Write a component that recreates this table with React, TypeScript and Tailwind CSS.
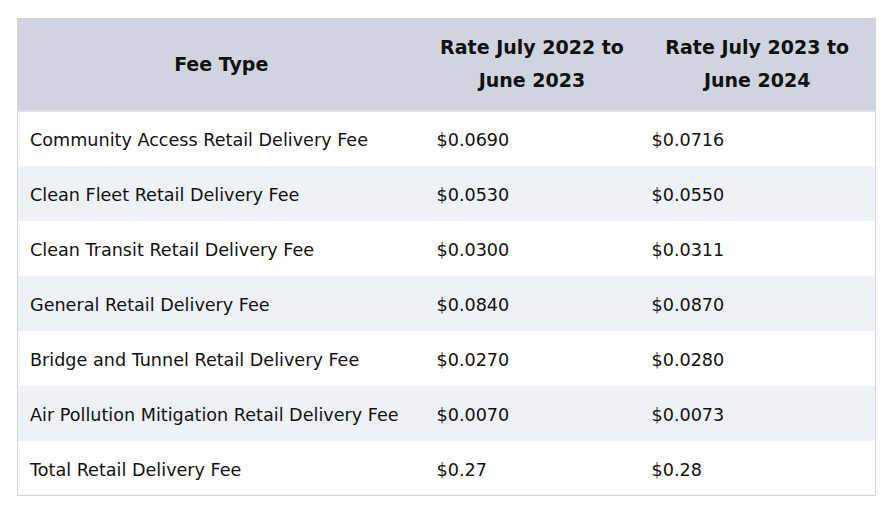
import React from 'react';

const rows = [
    ['Community Access Retail Delivery Fee', '$0.0690', '$0.0716'],
    ['Clean Fleet Retail Delivery Fee', '$0.0530', '$0.0550'],
    ['Clean Transit Retail Delivery Fee', '$0.0300', '$0.0311'],
    ['General Retail Delivery Fee', '$0.0840', '$0.0870'],
    ['Bridge and Tunnel Retail Delivery Fee', '$0.0270', '$0.0280'],
    ['Air Pollution Mitigation Retail Delivery Fee', '$0.0070', '$0.0073'],
    ['Total Retail Delivery Fee', '$0.27', '$0.28'],
];

const App: React.FC = () => {
    return (
        <div className="w-[889px] h-[508px] bg-white pt-[18px] pl-[17px]">
            <table className="w-[858px] table-fixed border-collapse border border-[#d4d4d4] text-[#111]">
                <colgroup>
                    <col className="w-[407px]" />
                    <col className="w-[215px]" />
                    <col className="w-[236px]" />
                </colgroup>
                <thead>
                    <tr className="h-[92px] bg-[#cfd4de] border-b-2 border-[#dde1e8] font-['DejaVu_Sans',sans-serif] font-bold text-[19px] leading-[33px]">
                        <th className="px-2 text-center">Fee Type</th>
                        <th className="px-2 text-center">Rate July 2022 to June 2023</th>
                        <th className="px-2 text-center">Rate July 2023 to June 2024</th>
                    </tr>
                </thead>
                <tbody className="font-['DejaVu_Sans',sans-serif] text-[17.6px]">
                    {rows.map((r, i) => (
                        <tr key={i} className={`h-[55px] ${i % 2 === 1 ? 'bg-[#eef1f6]' : 'bg-white'}`}>
                            <td className="pl-[12px] pr-1 pt-[4px] whitespace-nowrap">{r[0]}</td>
                            <td className="pl-[12px] pt-[4px]">{r[1]}</td>
                            <td className="pl-[12px] pt-[4px]">{r[2]}</td>
                        </tr>
                    ))}
                </tbody>
            </table>
        </div>
    );
};

export default App;
